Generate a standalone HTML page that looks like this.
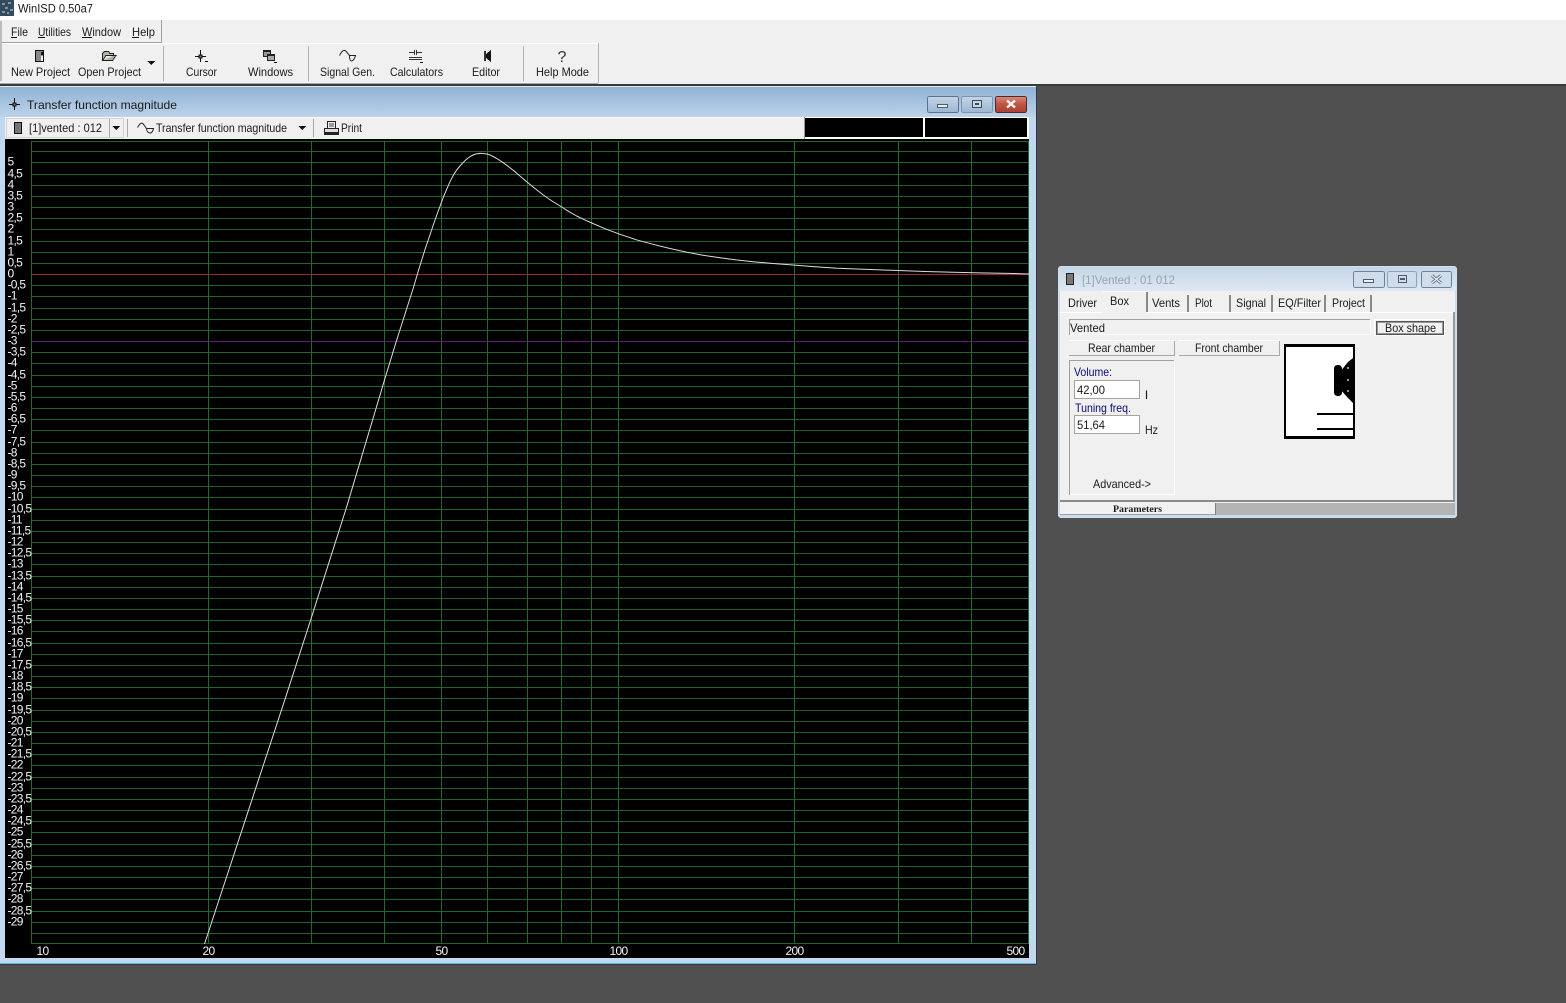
<!DOCTYPE html>
<html><head><meta charset="utf-8"><title>WinISD 0.50a7</title>
<style>
html,body{margin:0;padding:0;background:#505050;overflow:hidden}
svg{display:block;position:absolute;left:0;top:0}
text{font-family:"Liberation Sans",sans-serif;font-size:12px;fill:#1a1a1a}
.ax text{fill:#f4f4f4;letter-spacing:-.7px}
.bl{fill:#0a0a6e}
</style></head><body>
<svg width="1566" height="1003" viewBox="0 0 1566 1003" xmlns="http://www.w3.org/2000/svg" shape-rendering="crispEdges">
<defs>
<linearGradient id="t1" x1="0" y1="0" x2="0" y2="1"><stop offset="0" stop-color="#8fb1d3"/><stop offset="1" stop-color="#bcd3ea"/></linearGradient>
<linearGradient id="t2" x1="0" y1="0" x2="0" y2="1"><stop offset="0" stop-color="#c6d6e6"/><stop offset="1" stop-color="#dde8f3"/></linearGradient>
<linearGradient id="bb" x1="0" y1="0" x2="0" y2="1"><stop offset="0" stop-color="#c3d5e8"/><stop offset="1" stop-color="#9bb6d2"/></linearGradient>
<linearGradient id="rb" x1="0" y1="0" x2="0" y2="1"><stop offset="0" stop-color="#d98a7a"/><stop offset=".5" stop-color="#bd5443"/><stop offset="1" stop-color="#a83f32"/></linearGradient>
</defs>

<!-- desktop bg -->
<rect width="1566" height="1003" fill="#505050"/>
<!-- app title -->
<rect width="1566" height="20" fill="#fff"/>
<rect x="0" y="0" width="14" height="16" fill="#33495c"/>
<path d="M2 3h3v2H2zM8 2h3v2H8zM5 7h3v2H5zM10 9h3v2h-3zM2 11h3v2H2zM7 12h2v2H7z" fill="#7d96aa"/>
<text x="18" y="12.500" textLength="75" lengthAdjust="spacingAndGlyphs">WinISD 0.50a7</text>
<!-- menu / toolbar -->
<rect y="20" width="1566" height="64" fill="#f0f0f0"/>
<rect y="84" width="1566" height="2" fill="#3a3a3a"/>
<rect x="0" y="83" width="598" height="1" fill="#a8a8a8"/>
<rect x="0" y="42" width="161" height="1" fill="#a0a0a0"/>
<rect x="161" y="20" width="1" height="23" fill="#a0a0a0"/>
<rect x="0" y="43" width="598" height="1" fill="#fff"/>
<rect x="598" y="43" width="1" height="40" fill="#b4b4b4"/>
<rect x="0" y="21" width="2" height="60" fill="#bdbdbd"/>
<text x="11" y="36" textLength="17" lengthAdjust="spacingAndGlyphs">File</text>
<text x="38" y="36" textLength="33" lengthAdjust="spacingAndGlyphs">Utilities</text>
<text x="82" y="36" textLength="39" lengthAdjust="spacingAndGlyphs">Window</text>
<text x="132" y="36" textLength="23" lengthAdjust="spacingAndGlyphs">Help</text>
<rect x="11" y="37" width="6" height="1" fill="#111"/><rect x="38" y="37" width="7" height="1" fill="#111"/><rect x="82" y="37" width="10" height="1" fill="#111"/><rect x="132" y="37" width="7" height="1" fill="#111"/>
<!-- separators -->
<rect x="163" y="46" width="1" height="35" fill="#b0b0b0"/><rect x="308" y="46" width="1" height="35" fill="#b0b0b0"/><rect x="523" y="46" width="1" height="35" fill="#b0b0b0"/>
<!-- toolbar labels -->
<text x="11" y="76" textLength="59" lengthAdjust="spacingAndGlyphs">New Project</text>
<text x="78" y="76" textLength="63" lengthAdjust="spacingAndGlyphs">Open Project</text>
<text x="186" y="76" textLength="31" lengthAdjust="spacingAndGlyphs">Cursor</text>
<text x="248" y="76" textLength="45" lengthAdjust="spacingAndGlyphs">Windows</text>
<text x="320" y="76" textLength="55" lengthAdjust="spacingAndGlyphs">Signal Gen.</text>
<text x="390" y="76" textLength="53" lengthAdjust="spacingAndGlyphs">Calculators</text>
<text x="472" y="76" textLength="28" lengthAdjust="spacingAndGlyphs">Editor</text>
<text x="536" y="76" textLength="53" lengthAdjust="spacingAndGlyphs">Help Mode</text>
<!-- toolbar icons -->
<rect x="35.500" y="50.500" width="8" height="11" fill="#8a8a8a" stroke="#111"/><rect x="41" y="52" width="2" height="3" fill="#111"/><rect x="41" y="56" width="2" height="5" fill="#eee"/>
<path d="M102.500 60.500V53.500L104.500 51.500H108.500L110 53.500H113.500V55.500M102.500 60.500H112.500L116 55.500H106L102.500 60.500Z" fill="#b4b4a8" stroke="#222"/>
<path d="M147.500 61H155L151.250 65Z" fill="#111"/>
<path d="M200.500 50V62M195 56.500H206" stroke="#111" fill="none"/><rect x="199" y="55" width="3" height="3" fill="#777" stroke="#111" stroke-width="1"/><rect x="205" y="61" width="3" height="1" fill="#111"/>
<rect x="263.500" y="50.500" width="7" height="6" fill="#999" stroke="#222"/><rect x="267.500" y="54.500" width="7" height="6" fill="#aaa" stroke="#222"/><rect x="263" y="50" width="8" height="2" fill="#222"/><rect x="267" y="54" width="8" height="2" fill="#222"/><rect x="274" y="62" width="3" height="1" fill="#111"/>
<g shape-rendering="auto"><path d="M339.500 55.500L341.500 52Q344.500 48.500 347 52.500L349.500 55.500H355.500Q354 61 351.500 61Q349.500 61 349.500 55.500" fill="none" stroke="#222"/></g>
<path d="M409 52.500H414M417 52.500H422M414.500 50V55M416.500 50V55M409 57.500H422M409 59.500H422" stroke="#333" fill="none"/><rect x="420" y="62" width="3" height="1" fill="#111"/>
<rect x="484" y="51" width="2" height="10" fill="#333"/><path d="M486 54L491 50V62L486 58Z" fill="#111"/>
<text x="557.500" y="62" style="font-size:16px;fill:#333" textLength="9" lengthAdjust="spacingAndGlyphs">?</text>

<!-- main window frame -->
<rect x="0" y="86" width="1036" height="878" fill="#c2d8f0"/>
<rect x="0" y="86" width="1036" height="31" fill="url(#t1)"/>
<rect x="0" y="963" width="1036" height="1" fill="#5bb8dc"/>
<rect x="1036" y="86" width="1" height="878" fill="#2d3b48"/>
<rect x="0" y="964" width="1037" height="1" fill="#3a3a3a"/>
<rect x="0" y="86" width="1036" height="1" fill="#dde7f2"/>
<!-- window title -->
<path d="M14.500 98V110M9 104.500H20" stroke="#111" fill="none"/><rect x="13" y="103" width="3" height="3" fill="#777" stroke="#111"/>
<text x="27" y="109" textLength="150" lengthAdjust="spacingAndGlyphs">Transfer function magnitude</text>
<rect x="927.500" y="96.500" width="31" height="16" rx="2" fill="url(#bb)" stroke="#5b7288"/>
<rect x="937.500" y="104.500" width="10" height="3" fill="#e8eef4" stroke="#4d5c6b"/>
<rect x="961.500" y="96.500" width="31" height="16" rx="2" fill="url(#bb)" stroke="#7e93a8"/>
<rect x="972.500" y="100.500" width="9" height="7" fill="#c6d6e6" stroke="#3e4c5a"/><rect x="975" y="103" width="4" height="2" fill="#3e4c5a"/>
<rect x="995.500" y="96.500" width="31" height="16" rx="2" fill="url(#rb)" stroke="#4a2a2a"/>
<path d="M1007 100.500L1015 107.500M1015 100.500L1007 107.500" stroke="#f4f4f4" stroke-width="2.400" fill="none" shape-rendering="auto"/>
<!-- window toolbar -->
<rect x="5" y="117" width="1024" height="22" fill="#f0f0f0"/>
<rect x="5" y="117" width="1024" height="1" fill="#fafafa"/>
<rect x="6.500" y="118.500" width="117" height="19" fill="#f0f0f0" stroke="#d4d4d4"/>
<rect x="109" y="119" width="1" height="18" fill="#a8a8a8"/>
<rect x="127" y="119" width="1" height="18" fill="#a8a8a8"/><rect x="313" y="119" width="1" height="18" fill="#a8a8a8"/>
<rect x="14.500" y="122.500" width="7" height="11" fill="#777" stroke="#111"/>
<text x="29" y="132" textLength="73" lengthAdjust="spacingAndGlyphs">[1]vented : 012</text>
<path d="M112 126H120L116 130Z" fill="#111"/>
<path d="M137.500 127.500L139.500 124.500Q142 121.500 144 125L146.500 128.500H153.500Q152.500 133 150 133Q147 133 146.500 128.500" fill="none" stroke="#222" shape-rendering="auto"/>
<text x="156" y="132" textLength="131" lengthAdjust="spacingAndGlyphs">Transfer function magnitude</text>
<path d="M298 126H306L302 130Z" fill="#111"/>
<rect x="327.500" y="121.500" width="8" height="7" fill="#f0f0f0" stroke="#222"/><path d="M329 124H334M329 126H334" stroke="#444"/><rect x="324.500" y="128.500" width="14" height="4" fill="#ddd" stroke="#222"/><rect x="324" y="133" width="15" height="2" fill="#222"/>
<text x="341" y="132" textLength="21" lengthAdjust="spacingAndGlyphs">Print</text>
<!-- black display -->
<rect x="804" y="117" width="225" height="22" fill="#fff"/><rect x="804" y="117" width="1" height="22" fill="#999"/>
<rect x="805" y="118" width="118" height="19" fill="#000"/><rect x="925" y="118" width="102" height="19" fill="#000"/>

<!-- chart -->
<rect x="5" y="139" width="1024" height="819" fill="#000"/>
<path stroke="#27622e" fill="none" stroke-width="1" d="
M31 141.500H1029M31 151.500H1029M31 162.500H1029
M31 174.500H1029M31 185.500H1029M31 196.500H1029M31 207.500H1029M31 218.500H1029M31 229.500H1029
M31 241.500H1029M31 252.500H1029M31 263.500H1029M31 285.500H1029M31 296.500H1029
M31 308.500H1029M31 319.500H1029M31 330.500H1029M31 352.500H1029M31 363.500H1029
M31 375.500H1029M31 386.500H1029M31 397.500H1029M31 408.500H1029M31 419.500H1029M31 430.500H1029
M31 442.500H1029M31 453.500H1029M31 464.500H1029M31 475.500H1029M31 486.500H1029M31 497.500H1029
M31 509.500H1029M31 520.500H1029M31 531.500H1029M31 542.500H1029M31 553.500H1029M31 564.500H1029
M31 576.500H1029M31 587.500H1029M31 598.500H1029M31 609.500H1029M31 620.500H1029M31 631.500H1029
M31 643.500H1029M31 654.500H1029M31 665.500H1029M31 676.500H1029M31 687.500H1029M31 698.500H1029
M31 710.500H1029M31 721.500H1029M31 732.500H1029M31 743.500H1029M31 754.500H1029M31 765.500H1029
M31 777.500H1029M31 788.500H1029M31 799.500H1029M31 810.500H1029M31 821.500H1029M31 832.500H1029
M31 844.500H1029M31 855.500H1029M31 866.500H1029M31 877.500H1029M31 888.500H1029M31 899.500H1029
M31 911.500H1029M31 922.500H1029M31 933.500H1029M31 943.500H1029"/>
<g fill="#236a2c">
<rect x="31" y="141" width="1" height="803"/><rect x="208" y="141" width="1" height="803"/><rect x="311" y="141" width="1" height="803"/><rect x="384" y="141" width="1" height="803"/><rect x="441" y="141" width="1" height="803"/><rect x="487" y="141" width="1" height="803"/><rect x="527" y="141" width="1" height="803"/><rect x="561" y="141" width="1" height="803"/><rect x="591" y="141" width="1" height="803"/><rect x="618" y="141" width="1" height="803"/><rect x="794" y="141" width="1" height="803"/><rect x="898" y="141" width="1" height="803"/><rect x="971" y="141" width="1" height="803"/><rect x="1028" y="141" width="1" height="803"/>
</g>
<rect x="31" y="274" width="998" height="1" fill="#a02828"/>
<rect x="31" y="341" width="998" height="1" fill="#5e2070"/>
<polyline shape-rendering="auto" fill="none" stroke="#dcdcdc" stroke-width="1" stroke-linejoin="round" points="204.500,944 285,699.300 311.700,616.700 346.700,506.700 385,378.300 396.700,340 413.300,288 418.300,271 425,249.500 433.300,225 437.500,213 441.700,201.700 444,195.500 446.700,189.300 450,181.700 453.300,175.300 457,169.500 461.700,164 466,159.700 470,156.600 473,155 476,154 480,153.300 485,153.700 488,154.300 491,155.400 496,158 503.300,162.700 509,167 515,171.700 526.700,181.700 535,188.500 543.300,195 552,201 561.700,207 569,211.700 576.700,216 584,219.600 591.700,223 605,228.700 620,234.300 636,239.700 653,244.300 670,248.500 687,252.300 703,255.200 720,257.700 736,259.900 753,261.700 773,263.500 793,265 815,266.800 837,268.300 867,269.400 898,270.500 925,271.500 953,272.300 980,272.900 1008,273.400 1029,274"/>

<!-- y labels -->
<g class="ax" transform="translate(7.500 3.500)">
<text y="162">5</text><text y="174">4,5</text><text y="185">4</text><text y="196">3,5</text><text y="207">3</text><text y="218">2,5</text><text y="229">2</text><text y="241">1,5</text><text y="252">1</text><text y="263">0,5</text><text y="274">0</text>
<text y="285">-0,5</text><text y="296">-1</text><text y="308">-1,5</text><text y="319">-2</text><text y="330">-2,5</text><text y="341">-3</text><text y="352">-3,5</text><text y="363">-4</text><text y="375">-4,5</text><text y="386">-5</text><text y="397">-5,5</text><text y="408">-6</text><text y="419">-6,5</text><text y="430">-7</text><text y="442">-7,5</text><text y="453">-8</text><text y="464">-8,5</text><text y="475">-9</text><text y="486">-9,5</text><text y="497">-10</text><text y="509">-10,5</text><text y="520">-11</text><text y="531">-11,5</text><text y="542">-12</text><text y="553">-12,5</text><text y="564">-13</text><text y="576">-13,5</text><text y="587">-14</text><text y="598">-14,5</text><text y="609">-15</text><text y="620">-15,5</text><text y="631">-16</text><text y="643">-16,5</text><text y="654">-17</text><text y="665">-17,5</text><text y="676">-18</text><text y="687">-18,5</text><text y="698">-19</text><text y="710">-19,5</text><text y="721">-20</text><text y="732">-20,5</text><text y="743">-21</text><text y="754">-21,5</text><text y="765">-22</text><text y="777">-22,5</text><text y="788">-23</text><text y="799">-23,5</text><text y="810">-24</text><text y="821">-24,5</text><text y="832">-25</text><text y="844">-25,5</text><text y="855">-26</text><text y="866">-26,5</text><text y="877">-27</text><text y="888">-27,5</text><text y="899">-28</text><text y="911">-28,5</text><text y="922">-29</text>
</g>
<!-- x labels -->
<g class="ax">
<text x="36.500" y="955">10</text><text x="202.500" y="955">20</text><text x="435.500" y="955">50</text><text x="609.500" y="955">100</text><text x="785.500" y="955">200</text><text x="1006.500" y="955">500</text>
</g>

<!-- parameters window -->
<rect x="1058" y="266" width="399" height="252" rx="3" fill="#c9dbee"/>
<rect x="1058.500" y="266.500" width="398" height="251" rx="3" fill="none" stroke="#d2dfec"/>
<rect x="1059" y="267" width="397" height="24" fill="url(#t2)"/>
<rect x="1060" y="291" width="395" height="224" fill="#f0f0f0"/>
<rect x="1066.500" y="273.500" width="7" height="11" fill="#777" stroke="#222"/>
<text x="1082" y="284" textLength="93" lengthAdjust="spacingAndGlyphs" style="fill:#9aa3ad">[1]Vented : 01 012</text>
<rect x="1353.500" y="271.500" width="31" height="16" rx="2" fill="#cfdcea" stroke="#6e8296"/><rect x="1363.500" y="279.500" width="10" height="3" fill="#f0f4f8" stroke="#4d5c6b"/>
<rect x="1387.500" y="271.500" width="29" height="16" rx="2" fill="#cfdcea" stroke="#8fa2b4"/><rect x="1398.500" y="275.500" width="8" height="7" fill="#cfdcea" stroke="#4d5c6b"/><rect x="1400" y="278" width="5" height="2" fill="#4d5c6b"/>
<rect x="1421.500" y="271.500" width="30" height="16" rx="2" fill="#cfdcea" stroke="#6e8296"/><g shape-rendering="auto"><path d="M1432 275.500L1441 283M1441 275.500L1432 283" stroke="#5a6978" stroke-width="3" fill="none"/><path d="M1432 275.500L1441 283M1441 275.500L1432 283" stroke="#eef2f6" stroke-width="1.200" fill="none"/></g>
<!-- tabs -->
<rect x="1060" y="312" width="395" height="1" fill="#fff"/>
<rect x="1103" y="291" width="44" height="22" fill="#f0f0f0"/><rect x="1103" y="291" width="44" height="1" fill="#fff"/><rect x="1146" y="292" width="2" height="20" fill="#8a8a8a"/>
<rect x="1187" y="295" width="2" height="17" fill="#8a8a8a"/><rect x="1229" y="295" width="2" height="17" fill="#8a8a8a"/><rect x="1271" y="295" width="2" height="17" fill="#8a8a8a"/><rect x="1324" y="295" width="2" height="17" fill="#8a8a8a"/><rect x="1370" y="295" width="2" height="17" fill="#8a8a8a"/>
<rect x="1453" y="312" width="2" height="188" fill="#9a9a9a"/>
<text x="1068" y="307" textLength="29" lengthAdjust="spacingAndGlyphs">Driver</text>
<text x="1110" y="305" textLength="19" lengthAdjust="spacingAndGlyphs">Box</text>
<text x="1152" y="307" textLength="28" lengthAdjust="spacingAndGlyphs">Vents</text>
<text x="1195" y="307" textLength="17" lengthAdjust="spacingAndGlyphs">Plot</text>
<text x="1236" y="307" textLength="30" lengthAdjust="spacingAndGlyphs">Signal</text>
<text x="1278" y="307" textLength="43" lengthAdjust="spacingAndGlyphs">EQ/Filter</text>
<text x="1332" y="307" textLength="33" lengthAdjust="spacingAndGlyphs">Project</text>
<!-- vented field -->
<rect x="1069.500" y="319.500" width="301" height="15" fill="#f0f0f0" stroke="#fafafa"/><path d="M1069.500 335V319.500H1370" stroke="#a0a0a0" fill="none"/>
<text x="1070" y="332" textLength="35" lengthAdjust="spacingAndGlyphs">Vented</text>
<rect x="1374.500" y="319.500" width="70" height="16" fill="#f0f0f0" stroke="#fff"/><rect x="1376.500" y="321.500" width="67" height="13" fill="#f0f0f0" stroke="#555"/><rect x="1377.500" y="322.500" width="65" height="11" fill="none" stroke="#999"/>
<text x="1385" y="332" textLength="51" lengthAdjust="spacingAndGlyphs">Box shape</text>
<!-- chamber -->
<rect x="1069" y="340" width="106" height="16" fill="#f0f0f0"/><path d="M1069 355.500H1175M1174.500 340V356" stroke="#a8a8a8"/><path d="M1069 340.500H1175" stroke="#fff"/>
<rect x="1179" y="340" width="101" height="16" fill="#f0f0f0"/><path d="M1179 355.500H1280M1279.500 340V356" stroke="#a8a8a8"/><path d="M1179 340.500H1280" stroke="#fff"/>
<text x="1088" y="352" textLength="67" lengthAdjust="spacingAndGlyphs">Rear chamber</text>
<text x="1195" y="352" textLength="68" lengthAdjust="spacingAndGlyphs">Front chamber</text>
<!-- rear panel -->
<path d="M1069.500 495V360.500H1174" stroke="#a0a0a0" fill="none"/><path d="M1070 494.500H1174.500V361" stroke="#fff" fill="none"/>
<text class="bl" x="1074" y="376" textLength="38" lengthAdjust="spacingAndGlyphs">Volume:</text>
<rect x="1074.500" y="380.500" width="65" height="18" fill="#fff" stroke="#a8a498"/>
<text x="1077" y="394" textLength="28" lengthAdjust="spacingAndGlyphs">42,00</text>
<text x="1145" y="399" textLength="3" lengthAdjust="spacingAndGlyphs">l</text>
<text class="bl" x="1075" y="412" textLength="56" lengthAdjust="spacingAndGlyphs">Tuning freq.</text>
<rect x="1074.500" y="415.500" width="65" height="18" fill="#fff" stroke="#a8a498"/>
<text x="1077" y="429" textLength="28" lengthAdjust="spacingAndGlyphs">51,64</text>
<text x="1145" y="434" textLength="13" lengthAdjust="spacingAndGlyphs">Hz</text>
<text x="1093" y="488" textLength="58" lengthAdjust="spacingAndGlyphs">Advanced-&gt;</text>
<!-- box image -->
<rect x="1284" y="344" width="71" height="95" fill="#000"/>
<rect x="1286" y="347" width="67" height="89" fill="#fff"/>
<g shape-rendering="auto">
<rect x="1334" y="365" width="8" height="31" rx="3.500" fill="#000"/>
<path d="M1340 372L1348 362L1353 358V403L1348 398L1340 389Z" fill="#000"/>
<circle cx="1348" cy="368" r="1.100" fill="#aaa"/><circle cx="1348" cy="380" r="1.100" fill="#aaa"/><circle cx="1348" cy="391" r="1.100" fill="#aaa"/>
</g>
<rect x="1317" y="413" width="36" height="2" fill="#000"/><rect x="1317" y="428" width="36" height="2" fill="#000"/>
<!-- status -->
<rect x="1060" y="500" width="395" height="2" fill="#8a8a8a"/>
<rect x="1060" y="502" width="155" height="13" fill="#f0f0f0"/><rect x="1060" y="514" width="395" height="1" fill="#a0a0a0"/>
<rect x="1215" y="503" width="1" height="12" fill="#808080"/>
<rect x="1216" y="503" width="239" height="12" fill="#b4b4b4"/>
<text x="1113" y="512" textLength="49" lengthAdjust="spacingAndGlyphs" style="font-family:'Liberation Serif',serif;font-weight:bold;font-size:9px">Parameters</text>
</svg>
</body></html>
